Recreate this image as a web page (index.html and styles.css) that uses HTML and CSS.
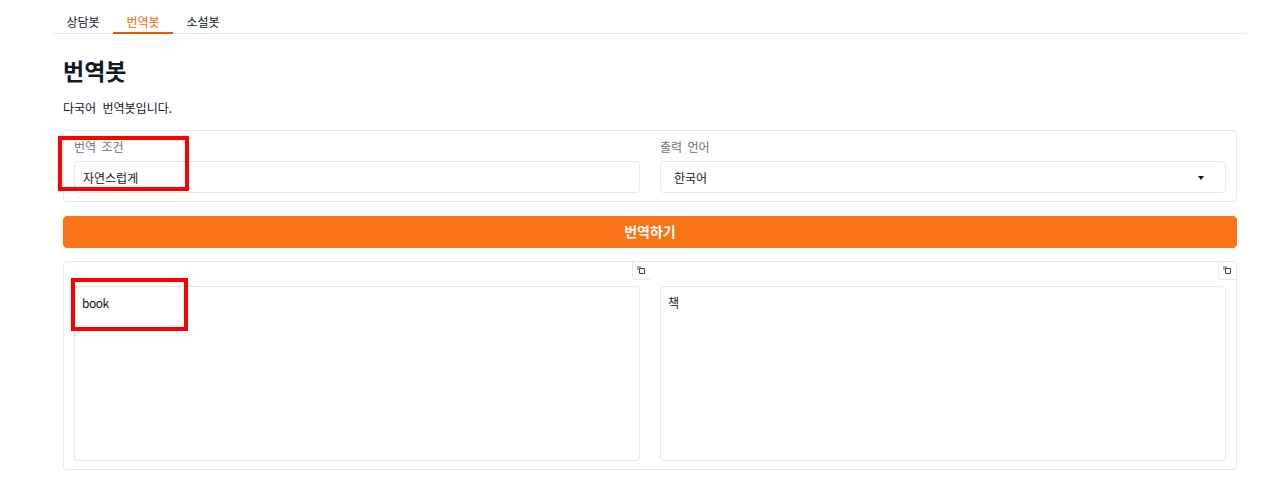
FILE: index.html
```html
<!DOCTYPE html>
<html lang="ko">
<head>
<meta charset="utf-8">
<title>번역봇</title>
<link rel="stylesheet" href="styles.css">
</head>
<body>
<div class="app">
  <nav class="tabs">
    <button class="tab">상담봇</button>
    <button class="tab active">번역봇</button>
    <button class="tab">소설봇</button>
  </nav>
  <main class="main">
    <h1 class="title">번역봇</h1>
    <p class="desc">다국어 번역봇입니다.</p>
    <section class="panel form">
      <div class="field">
        <div class="label">번역 조건</div>
        <div class="control">자연스럽게</div>
        <div class="mark mark-a"></div>
      </div>
      <div class="field">
        <div class="label">출력 언어</div>
        <div class="control select">한국어<span class="caret"></span></div>
      </div>
    </section>
    <button class="submit">번역하기</button>
    <section class="panel output">
      <div class="cell">
        <div class="copy-row"><button class="copy" aria-label="복사"><svg width="10" height="10" viewBox="0 0 10 10"><path d="M1 1h4v2H3v2H1z" fill="#aaa"/><path d="M3.5 3.5h5v5h-5z" fill="#fff" stroke="#444" stroke-width="1"/></svg></button></div>
        <div class="area">book</div>
        <div class="mark mark-b"></div>
      </div>
      <div class="cell">
        <div class="copy-row"><button class="copy" aria-label="복사"><svg width="10" height="10" viewBox="0 0 10 10"><path d="M1 1h4v2H3v2H1z" fill="#aaa"/><path d="M3.5 3.5h5v5h-5z" fill="#fff" stroke="#444" stroke-width="1"/></svg></button></div>
        <div class="area">책</div>
      </div>
    </section>
  </main>
</div>
</body>
</html>
```
FILE: styles.css
```css
* { box-sizing: border-box; }
html, body { margin: 0; padding: 0; background: #fff; overflow: hidden; }
body {
  font-family: "Noto Sans CJK KR", "Liberation Sans", sans-serif;
  font-size: 12px;
  color: #111827;
}
.app { padding: 0 33px 0 53px; }
.tabs {
  display: flex;
  height: 34px;
  padding-top: 10px;
  border-bottom: 1px solid #e5e7eb;
}
.tab {
  width: 60px;
  height: 24px;
  padding: 0;
  border: 0;
  background: none;
  font: inherit;
  color: #111827;
  line-height: 24px;
}
.tab.active {
  color: #ea6a0c;
  border-bottom: 2px solid #ea580c;
  height: 24px;
}
.main { padding: 0 10px; }
.title {
  margin: 22px 0 0;
  height: 28px;
  font-size: 23px;
  line-height: 28px;
  font-weight: 700;
}
.desc {
  margin: 15px 0 0;
  height: 18px;
  line-height: 18px;
  word-spacing: 3px;
}
.panel {
  display: grid;
  grid-template-columns: 1fr 1fr;
  border: 1px solid #e7e7e9;
  border-radius: 4px;
}
.form {
  margin-top: 13px;
  height: 72px;
  padding: 7px 10px 0;
  column-gap: 20px;
}
.field { position: relative; }
.label {
  height: 18px;
  line-height: 18px;
  color: #6b7280;
  word-spacing: 2px;
}
.control {
  position: relative;
  height: 32px;
  margin-top: 5px;
  padding: 0 8px;
  line-height: 32px;
  border: 1px solid #e7e7e9;
  border-radius: 4px;
}
.select { padding-left: 13px; }
.caret {
  position: absolute;
  top: 14px;
  right: 21px;
  border: 3.5px solid transparent;
  border-top: 4px solid #111;
  border-bottom: 0;
}
.submit {
  display: block;
  width: 100%;
  height: 32px;
  margin-top: 14px;
  padding: 0 0 2px;
  border: 1px solid #f97316;
  border-radius: 4px;
  background: #fa7316;
  color: #fff;
  font: inherit;
  font-size: 14px;
  font-weight: 700;
}
.output {
  margin-top: 13px;
  height: 209px;
}
.cell {
  position: relative;
  padding: 0 10px;
}
.copy-row {
  display: flex;
  justify-content: flex-end;
  height: 18px;
  margin: 0 -10px 6px 0;
}
.copy {
  display: flex;
  align-items: center;
  justify-content: center;
  width: 18px;
  height: 18px;
  padding: 0 1px 1px 0;
  background: #fff;
  border: 0;
  border-left: 1px solid #e7e7e9;
  border-bottom: 1px solid #e7e7e9;
  border-bottom-left-radius: 4px;
}
.area {
  height: 175px;
  padding: 8px 8px 8px 7px;
  line-height: 16px;
  letter-spacing: -0.5px;
  border: 1px solid #e7e7e9;
  border-radius: 4px;
}
.mark {
  position: absolute;
  border: 4px solid #fe0000;
  pointer-events: none;
}
.mark-a { left: -16px; top: -2px; width: 131px; height: 55px; }
.mark-b { left: 7px; top: 16px; width: 117px; height: 53px; }
```
